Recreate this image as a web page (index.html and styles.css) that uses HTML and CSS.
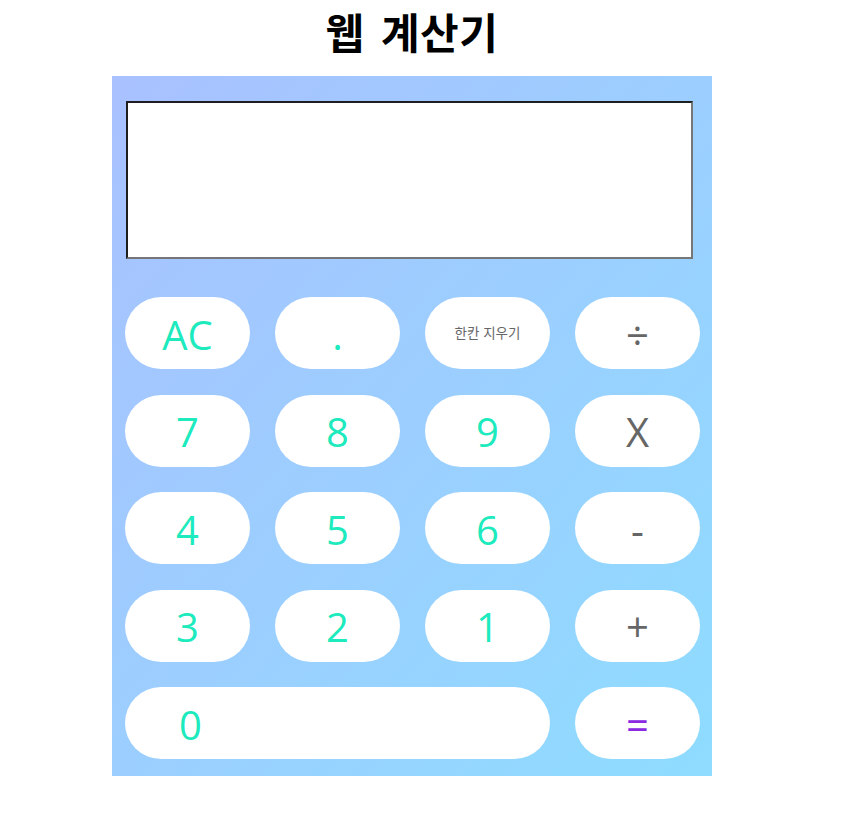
FILE: index.html
```html
<!DOCTYPE html>
<html lang="ko">
<head>
<meta charset="utf-8">
<title>웹 계산기</title>
<link rel="stylesheet" href="styles.css">
</head>
<body>
<div class="page">
  <h1 class="title">웹 계산기</h1>
  <div class="calc">
    <div class="display"></div>
    <div class="keys">
      <button class="key num">AC</button>
      <button class="key num">.</button>
      <button class="key small">한칸 지우기</button>
      <button class="key op">÷</button>
      <button class="key num">7</button>
      <button class="key num">8</button>
      <button class="key num">9</button>
      <button class="key op">X</button>
      <button class="key num">4</button>
      <button class="key num">5</button>
      <button class="key num">6</button>
      <button class="key op">-</button>
      <button class="key num">3</button>
      <button class="key num">2</button>
      <button class="key num">1</button>
      <button class="key op">+</button>
      <button class="key num zero">0</button>
      <button class="key eq">=</button>
    </div>
  </div>
</div>
</body>
</html>
```
FILE: styles.css
```css
html, body {
  margin: 0;
  padding: 0;
  background: #ffffff;
}
.page {
  width: 824px;
}
.title {
  margin: 0;
  height: 76px;
  box-sizing: border-box;
  padding-top: 0;
  line-height: normal;
  text-align: center;
  font-family: "Noto Sans CJK KR", "Noto Sans", sans-serif;
  font-weight: 700;
  font-size: 42px;
  word-spacing: 4px;
  letter-spacing: 0.5px;
  color: #000;
}
.calc {
  width: 600px;
  height: 700px;
  margin: 0 auto;
  box-sizing: border-box;
  padding: 25px 0 0 0;
  background: linear-gradient(to bottom right, #a9c1ff, #8edcff);
}
.display {
  box-sizing: border-box;
  width: 567px;
  height: 158px;
  margin-left: 14px;
  background: #fff;
  border: 2px solid;
  border-color: #1e1e1e #767676 #767676 #1e1e1e;
}
.keys {
  margin: 38px 0 0 13px;
  display: grid;
  grid-template-columns: repeat(4, 125px);
  grid-auto-rows: 72px;
  column-gap: 25px;
  row-gap: 25.5px;
}
.key {
  border: none;
  border-radius: 36px;
  background: #fff;
  padding: 3px 0 0 0;
  font-family: "Open Sans", "Noto Sans", sans-serif;
  font-size: 40px;
  line-height: 1;
  cursor: pointer;
}
.num {
  color: #1deabd;
}
.op {
  color: #666666;
}
.small {
  font-family: "Noto Sans CJK KR", "Noto Sans", sans-serif;
  font-size: 13.5px;
  color: #666666;
  padding-top: 0;
}
.eq {
  color: #8a2be2;
}
.zero {
  grid-column: span 3;
  text-align: left;
  padding-left: 54px;
}
```
